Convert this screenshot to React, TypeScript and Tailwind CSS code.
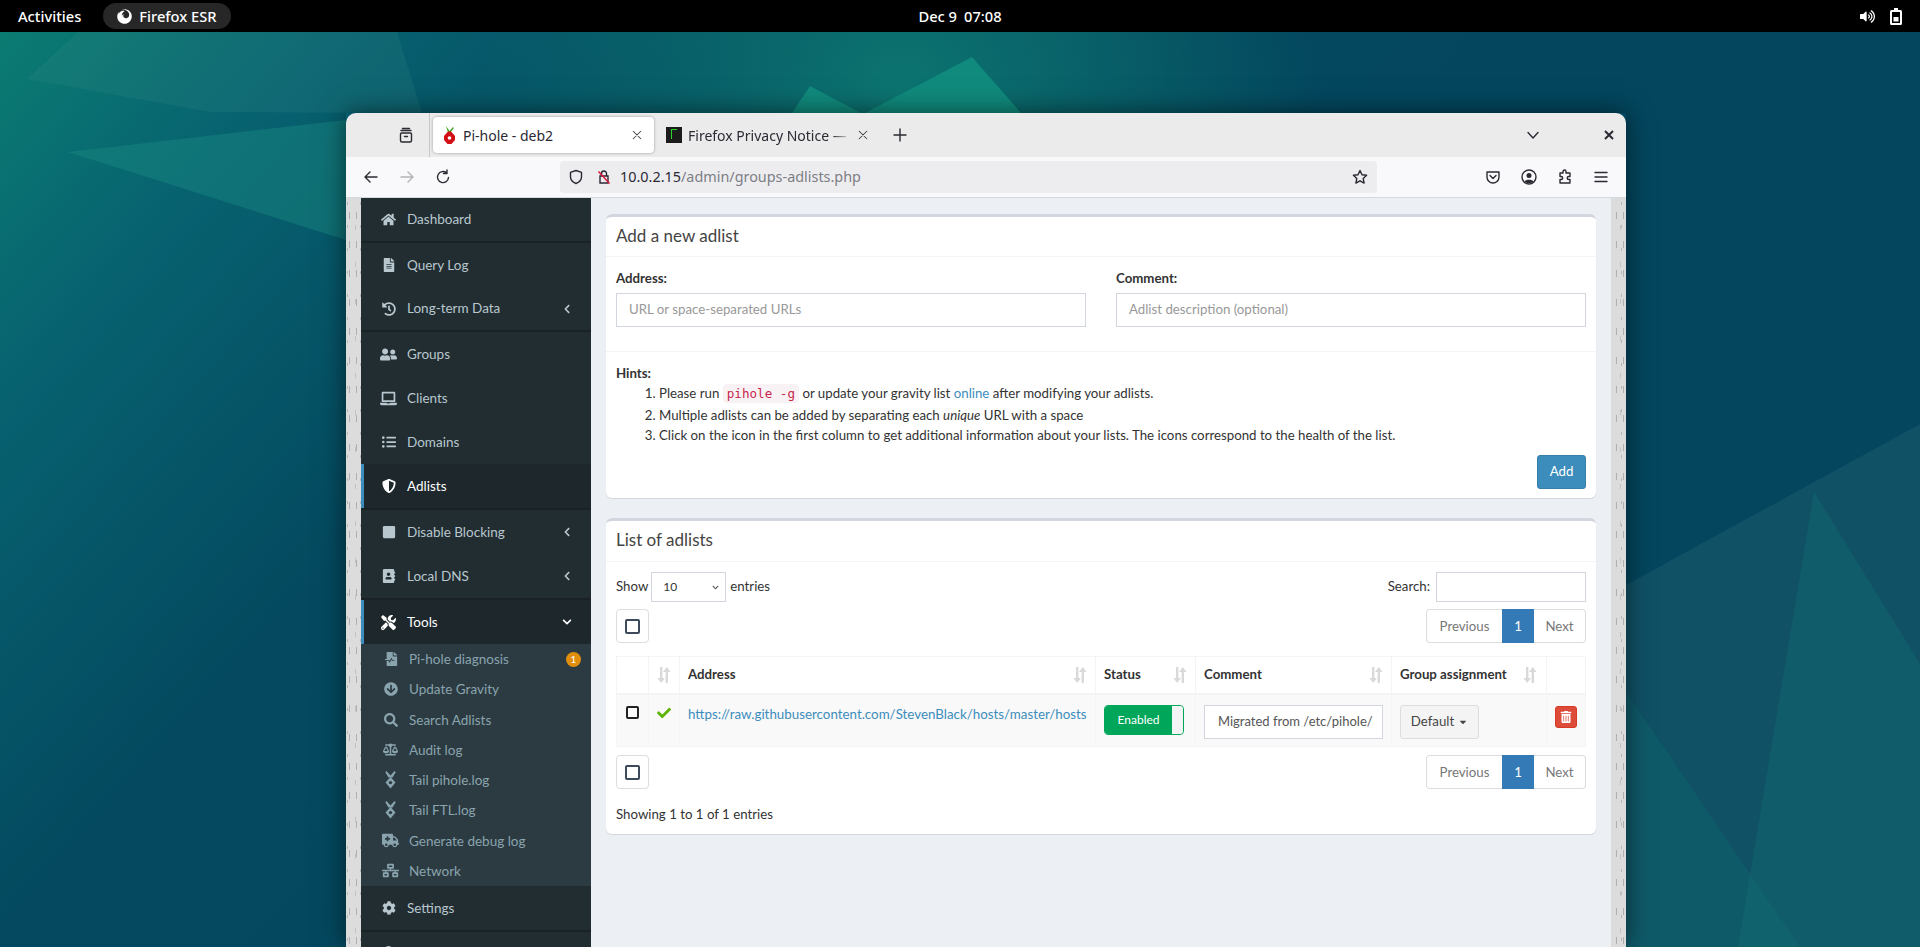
import React from 'react';
import {
  FaAddressBook, FaAmbulance, FaArrowCircleDown, FaBalanceScale, FaCaretDown, FaCheck, FaChevronDown, FaChevronLeft, FaCog,
  FaFileAlt, FaFileMedicalAlt, FaFirefox, FaHistory, FaHome, FaLaptop, FaListUl, FaNetworkWired, FaSearch, FaShieldAlt,
  FaStop, FaTools, FaTrashAlt, FaUser, FaUserFriends, FaVolumeUp,
} from 'react-icons/fa';

const ui = "font-['Lato','Liberation_Sans',sans-serif]";

// pi-hole's own log icon, no package has this one
const PiholeIcon = () => (
  <svg width="13" height="18" viewBox="0 0 13 18" fill="currentColor">
    <path d="M2.500 0l4 4.500L10.500 0l1.200 1.200L8.500 6.500h-4L1.300 1.200z" />
    <path d="M6.500 6l5 5.500-5 6-5-6z" />
    <circle cx="6.500" cy="11.600" r="1.700" fill="#2c3b41" />
  </svg>
);

const SortIcon = () => (
  <svg width="14" height="16" viewBox="0 0 14 16" fill="#d9d9d9" className="shrink-0">
    <path d="M3 0h2.400v11H8l-3.800 5L.4 11H3z" />
    <path d="M8.600 16h2.400V5h2.600L9.800 0 6 5h2.600z" />
  </svg>
);

const Wallpaper = () => (
  <svg className="absolute inset-0 h-full w-full" viewBox="0 0 1920 915" preserveAspectRatio="none">
    <defs>
      <linearGradient id="wall" gradientUnits="userSpaceOnUse" x1="0" y1="0" x2="900" y2="800">
        <stop offset="0" stopColor="#0b7c72" />
        <stop offset="0.2" stopColor="#076270" />
        <stop offset="0.5" stopColor="#04495f" />
        <stop offset="1" stopColor="#03465e" />
      </linearGradient>
      <radialGradient id="glow" gradientUnits="userSpaceOnUse" cx="900" cy="60" r="420">
        <stop offset="0" stopColor="#0c7470" />
        <stop offset="1" stopColor="#0c7470" stopOpacity="0" />
      </radialGradient>
    </defs>
    <rect width="1920" height="915" fill="url(#wall)" />
    <rect width="1920" height="915" fill="url(#glow)" />
    <polygon points="78,0 27,47 210,80 422,81 397,0" fill="#3f8f8c" opacity="0.18" />
    <polygon points="68,120 346,88 346,208" fill="#1a8a80" opacity="0.45" />
    <polygon points="810,54 792,81 861,81" fill="#108a7c" />
    <polygon points="972,25 865,81 1021,81" fill="#108a7c" />
    <polygon points="1920,392 1626,553 1626,915 1920,915" fill="#2a6a78" opacity="0.32" />
    <polygon points="1814,460 1920,632 1920,915 1738,915" fill="#138078" opacity="0.25" />
    <polygon points="1626,660 1800,915 1626,915" fill="#0f7a78" opacity="0.22" />
  </svg>
);

const Topbar = () => (
  <div className="relative z-10 flex h-8 items-center justify-between bg-black pl-[18px] pr-[18px] font-['Noto_Sans',sans-serif] text-[14.700px] font-medium text-white">
    <div className="flex flex-1 items-center">
      <span>Activities</span>
      <div className="ml-[22px] flex h-[26px] items-center gap-[7px] rounded-full bg-[#272727] pl-[14px] pr-[14px]">
        <FaFirefox size={15} />
        <span>Firefox ESR</span>
      </div>
    </div>
    <div className="flex gap-[7px]"><span>Dec 9</span><span>07:08</span></div>
    <div className="flex flex-1 items-center justify-end gap-[15px]">
      <FaVolumeUp size={15} />
      <svg width="12" height="17" viewBox="0 0 12 17" fill="white"><path d="M4 0h4v2h2.500a1.500 1.500 0 0 1 1.500 1.500V15.500a1.500 1.500 0 0 1-1.500 1.500h-9A1.500 1.500 0 0 1 0 15.500V3.500A1.500 1.500 0 0 1 1.500 2H4zM2 4v11h8V4zM3.500 9h5v4.500h-5z" fillRule="evenodd" /></svg>
    </div>
  </div>
);

const ChromeIcon = ({ d, className = '' }: { d: string; className?: string }) => (
  <svg width="16" height="16" viewBox="0 0 16 16" fill="none" stroke="currentColor" strokeWidth="1.400" strokeLinecap="round" strokeLinejoin="round" className={`shrink-0 ${className}`}>
    <path d={d} />
  </svg>
);

const Browser = () => (
  <div className="font-['Noto_Sans',sans-serif] text-[#2b2a33]">
    <div className="flex h-11 items-center rounded-t-[10px] bg-[#ebebeb]">
      <div className="flex h-full w-[83px] items-center justify-center pl-[37px]">
        <ChromeIcon d="M4.500 1.500h7M3 3.500h10M3.500 6h9a1 1 0 0 1 1 1v6.500a1.500 1.500 0 0 1-1.500 1.500H4a1.500 1.500 0 0 1-1.500-1.500V7a1 1 0 0 1 1-1zM6.500 9.500h3" />
      </div>
      <div className="h-full w-px bg-[#c8c8c8]" />
      <div className="ml-[3px] flex h-9 w-[221px] items-center rounded-[4px] bg-white pl-[10px] pr-[11px] text-[14px] shadow-[0_0_3px_rgba(0,0,0,0.35)]">
        <svg width="13" height="19" viewBox="0 0 13 19" className="mr-[7px] shrink-0">
          <path d="M3 0l3.500 5L10 1l.8 1-3 4h-3z" fill="#3ea31e" />
          <path d="M5 5.500h3L12 10v4l-3.500 4h-4L1 14v-4z" fill="#d10f14" />
          <circle cx="6.500" cy="12" r="1.800" fill="#fff" />
        </svg>
        <span>Pi-hole - deb2</span>
        <span className="ml-auto text-[#444]"><ChromeIcon className="h-3 w-3" d="M3 3l10 10M13 3L3 13" /></span>
      </div>
      <div className="flex h-9 items-center pl-[12px] text-[14px]">
        <div className="mr-[6px] flex h-4 w-4 shrink-0 items-start justify-center bg-[#1c1c1c] pt-[2px]"><div className="h-[10px] w-[6px] border-l border-t border-[#27d827]" /></div>
        <span className="w-[163px] overflow-hidden whitespace-nowrap [mask-image:linear-gradient(to_right,black_88%,transparent)]">Firefox Privacy Notice — Mozilla</span>
        <span className="ml-[6px] text-[#444]"><ChromeIcon className="h-3 w-3" d="M3 3l10 10M13 3L3 13" /></span>
      </div>
      <ChromeIcon className="ml-[23px]" d="M8 2v12M2 8h12" />
      <div className="ml-auto flex items-center">
        <ChromeIcon className="mr-[63px]" d="M3 5.500l5 5.500 5-5.500" />
        <svg width="10" height="10" viewBox="0 0 10 10" className="mr-[12px]" stroke="#2b2a33" strokeWidth="2"><path d="M1 1l8 8M9 1L1 9" /></svg>
      </div>
    </div>
    <div className="flex h-[40px] items-center bg-[#f9f9fb] pl-[17px] pr-[17px]">
      <ChromeIcon d="M14 8H2M7 3L2 8l5 5" />
      <ChromeIcon className="ml-[20px] text-[#b3b3b6]" d="M2 8h12M9 3l5 5-5 5" />
      <ChromeIcon className="ml-[20px]" d="M13.500 8.500A5.500 5.500 0 1 1 11.500 3.800M12 1v3.500H8.500" />
      <div className="ml-[109px] flex h-[32px] w-[817px] items-center rounded-[4px] bg-[#ededf0] pl-[8px] pr-[9px] text-[14.400px]">
        <ChromeIcon d="M8 1.500l5.500 1.800v4.700c0 3.200-2.500 5.300-5.500 6.500-3-1.200-5.500-3.300-5.500-6.500V3.300z" />
        <svg width="16" height="16" viewBox="0 0 16 16" fill="none" strokeWidth="1.400" className="ml-[12px] shrink-0">
          <path d="M4 7h8v7H4zM5.500 7V4.500a2.500 2.500 0 0 1 5 0V7" stroke="#2b2a33" />
          <path d="M2.500 2.500l11 12" stroke="#e0123a" />
        </svg>
        <span className="ml-[8px]">10.0.2.15<span className="text-[#7d7d84]">/admin/groups-adlists.php</span></span>
        <ChromeIcon className="ml-auto" d="M8 1.500l2 4.200 4.600.6-3.400 3.200.9 4.600L8 11.800l-4.100 2.300.9-4.600L1.400 6.300 6 5.700z" />
      </div>
      <div className="ml-auto flex items-center gap-[20px]">
        <ChromeIcon d="M2 3h12v5a6 6 0 0 1-12 0zM5 6.500l3 3 3-3" />
        <svg width="16" height="16" viewBox="0 0 16 16" fill="none"><circle cx="8" cy="8" r="7" stroke="#2b2a33" strokeWidth="1.400" /><circle cx="8" cy="6.500" r="2.500" fill="#2b2a33" /><path d="M3.500 12.500c1-2.500 8-2.500 9 0C11 14.500 5 14.500 3.500 12.500z" fill="#2b2a33" /></svg>
        <ChromeIcon d="M6 2.500a1.500 1.500 0 0 1 3 0V4h4v3.500h-1.300a1.500 1.500 0 0 0 0 3H13V14H3v-3.500h1.200a1.500 1.500 0 0 0 0-3H3V4h3z" />
        <ChromeIcon d="M2 3.500h12M2 8h12M2 12.500h12" />
      </div>
    </div>
    <div className="h-px bg-[#d4dae2]" />
  </div>
);

type NavItem = { label: string; icon: React.ReactNode; arrow?: boolean; active?: boolean; open?: boolean; sep?: boolean; h?: string };

const nav1: NavItem[] = [
  { label: 'Dashboard', icon: <FaHome size={15} />, sep: true, h: 'h-[45px]' },
  { label: 'Query Log', icon: <FaFileAlt size={14} />, h: 'h-[44px]' },
  { label: 'Long-term Data', icon: <FaHistory size={14} />, arrow: true, sep: true, h: 'h-[45px]' },
  { label: 'Groups', icon: <FaUserFriends size={17} />, h: 'h-[44px]' },
  { label: 'Clients', icon: <FaLaptop size={17} />, h: 'h-[44px]' },
  { label: 'Domains', icon: <FaListUl size={14} />, h: 'h-[44px]' },
  { label: 'Adlists', icon: <FaShieldAlt size={14} />, active: true, sep: true, h: 'h-[46px]' },
  { label: 'Disable Blocking', icon: <FaStop size={14} />, arrow: true, h: 'h-[44px]' },
  { label: 'Local DNS', icon: <FaAddressBook size={14} />, arrow: true, sep: true, h: 'h-[46px]' },
  { label: 'Tools', icon: <FaTools size={15} />, active: true, open: true, h: 'h-[44px]' },
];

const subNav: { label: string; icon: React.ReactNode; badge?: boolean }[] = [
  { label: 'Pi-hole diagnosis', icon: <FaFileMedicalAlt size={14} />, badge: true },
  { label: 'Update Gravity', icon: <FaArrowCircleDown size={14} /> },
  { label: 'Search Adlists', icon: <FaSearch size={14} /> },
  { label: 'Audit log', icon: <FaBalanceScale size={15} /> },
  { label: 'Tail pihole.log', icon: <PiholeIcon /> },
  { label: 'Tail FTL.log', icon: <PiholeIcon /> },
  { label: 'Generate debug log', icon: <FaAmbulance size={17} /> },
  { label: 'Network', icon: <FaNetworkWired size={17} /> },
];

const Sidebar = () => (
  <aside className="h-full w-[230px] shrink-0 overflow-hidden bg-[#222d32] text-[13.500px]">
    {nav1.map((n) => (
      <div key={n.label} className={`${n.h} ${n.sep ? 'border-b-2 border-[#1a2226]' : ''}`}>
        <div className={`flex h-full items-center border-l-[3px] pr-[19px] ${n.active ? 'border-[#3c8dbc] bg-[#1e282c] text-white' : 'border-transparent text-[#b8c7ce]'}`}>
          <span className="ml-[16px] mr-[10px] flex w-[17px] justify-center">{n.icon}</span>
          <span>{n.label}</span>
          {n.arrow && <FaChevronLeft size={10} className="ml-auto" />}
          {n.open && <FaChevronDown size={10} className="ml-auto" />}
        </div>
      </div>
    ))}
    <ul className="bg-[#2c3b41] text-[#8aa4af]">
      {subNav.map((s) => (
        <li key={s.label} className="flex h-[30.250px] items-center pl-[21px] pr-[10px]">
          <span className="mr-[10px] flex w-[17px] justify-center">{s.icon}</span>
          <span>{s.label}</span>
          {s.badge && <span className="ml-auto flex h-[15px] w-[15px] items-center justify-center rounded-full bg-[#e08e0b] text-[10px] text-white">1</span>}
        </li>
      ))}
    </ul>
    <div className="h-[46px] border-b-2 border-[#1a2226]">
      <div className="flex h-full items-center border-l-[3px] border-transparent text-[#b8c7ce]">
        <span className="ml-[16px] mr-[10px] flex w-[17px] justify-center"><FaCog size={14} /></span>
        <span>Settings</span>
      </div>
    </div>
    <div className="flex h-[44px] items-center pl-[19px] text-[#b8c7ce]">
      <span className="flex w-[17px] justify-center"><FaUser size={17} /></span>
    </div>
  </aside>
);

const cardCls = 'rounded-[6px] border-t-[3px] border-[#d2d6de] bg-white shadow-[0_1px_1px_rgba(0,0,0,0.1)]';
const inputCls = 'border border-[#d2d6de] bg-white';

const Pager = () => (
  <div className="flex h-[34px] text-[#777]">
    <div className="flex w-[76px] items-center justify-center rounded-l-[4px] border border-r-0 border-[#ddd] pt-px">Previous</div>
    <div className="flex w-[32px] items-center justify-center bg-[#337ab7] pt-px text-white">1</div>
    <div className="flex w-[52px] items-center justify-center rounded-r-[4px] border border-l-0 border-[#ddd] pt-px">Next</div>
  </div>
);

const SelectAll = () => (
  <div className="flex h-[34px] w-[33px] items-center justify-center rounded-[4px] border border-[#ddd]">
    <div className="h-[15px] w-[15px] rounded-[2px] border-2 border-[#3d4a5c]" />
  </div>
);

const thCls = 'border-r border-[#f4f4f4] px-[8px]';

const Content = () => (
  <main className={`flex flex-1 flex-col gap-[20px] bg-[#ecf0f5] px-[15px] pt-[16px] text-[13.250px] text-[#333] ${ui}`}>
    <section className={`${cardCls} h-[284px]`}>
      <h3 className="flex h-[40px] items-center border-b border-[#f4f4f4] px-[10px] pb-[2px] text-[17px] text-[#444]">Add a new adlist</h3>
      <div className="flex h-[95px] gap-[30px] border-b border-[#f4f4f4] px-[10px] pt-[12px]">
        <div className="flex-1">
          <label className="block font-bold leading-[18px]">Address:</label>
          <div className={`${inputCls} mt-[6px] flex h-[34px] items-center px-[12px] text-[#999]`}>URL or space-separated URLs</div>
        </div>
        <div className="flex-1">
          <label className="block font-bold leading-[18px]">Comment:</label>
          <div className={`${inputCls} mt-[6px] flex h-[34px] items-center px-[12px] text-[#999]`}>Adlist description (optional)</div>
        </div>
      </div>
      <div className="px-[10px] pt-[11px]">
        <p className="font-bold leading-[20px]">Hints:</p>
        <ol className="list-decimal pl-[43px] leading-[20.500px]">
          <li>Please run <code className="rounded-[4px] bg-[#f9f2f4] px-[4px] py-[2px] font-['DejaVu_Sans_Mono',monospace] text-[12.600px] text-[#c7254e]">pihole -g</code> or update your gravity list <span className="text-[#3c8dbc]">online</span> after modifying your adlists.</li>
          <li>Multiple adlists can be added by separating each <i>unique</i> URL with a space</li>
          <li>Click on the icon in the first column to get additional information about your lists. The icons correspond to the health of the list.</li>
        </ol>
        <div className="mt-[9px] flex justify-end">
          <button className="h-[34px] w-[49px] rounded-[3px] border border-[#367fa9] bg-[#3c8dbc] text-white">Add</button>
        </div>
      </div>
    </section>

    <section className={`${cardCls} h-[316px]`}>
      <h3 className="flex h-[41px] items-center border-b border-[#f4f4f4] px-[10px] pb-[2px] text-[17px] text-[#444]">List of adlists</h3>
      <div className="px-[10px] pt-[10px]">
        <div className="flex h-[30px] items-center justify-between">
          <div className="flex items-center">
            <span>Show</span>
            <div className={`${inputCls} ml-[3px] mr-[4px] flex h-[30px] w-[75px] items-center justify-between pl-[11px] pr-[6px] text-[12px]`}>
              <span>10</span>
              <FaChevronDown size={7} className="text-[#555]" />
            </div>
            <span>entries</span>
          </div>
          <div className="flex items-center">
            <span className="mr-[6px]">Search:</span>
            <div className={`${inputCls} h-[30px] w-[150px]`} />
          </div>
        </div>
        <div className="mt-[7px] flex items-center justify-between">
          <SelectAll />
          <Pager />
        </div>
        <table className="mt-[13px] w-full table-fixed border-collapse border border-[#f4f4f4]">
          <colgroup>
            <col className="w-[32px]" /><col className="w-[31px]" /><col className="w-[416px]" /><col className="w-[100px]" /><col className="w-[196px]" /><col className="w-[155px]" /><col />
          </colgroup>
          <thead>
            <tr className="h-[37px] border-b-2 border-[#f4f4f4] font-bold">
              <th className={thCls} />
              <th className={thCls}><SortIcon /></th>
              <th className={`${thCls} pt-px`}><div className="flex items-center justify-between text-left">Address<SortIcon /></div></th>
              <th className={`${thCls} pt-px`}><div className="flex items-center justify-between text-left">Status<SortIcon /></div></th>
              <th className={`${thCls} pt-px`}><div className="flex items-center justify-between text-left">Comment<SortIcon /></div></th>
              <th className={`${thCls} pt-px`}><div className="flex items-center justify-between whitespace-nowrap pr-[1px] text-left">Group assignment<SortIcon /></div></th>
              <th />
            </tr>
          </thead>
          <tbody>
            <tr className="h-[53px] bg-[#f9f9f9] align-top">
              <td className={`${thCls} pt-[11px]`}><div className="mx-auto h-[13px] w-[13px] rounded-[2px] border-2 border-[#222]" /></td>
              <td className={`${thCls} pt-[11px]`}><FaCheck size={14} className="text-[#5cb300]" /></td>
              <td className={`${thCls} whitespace-nowrap pt-[9px] text-[13.350px] text-[#3c8dbc]`}>https://raw.githubusercontent.com/StevenBlack/hosts/master/hosts</td>
              <td className={`${thCls} pt-[10px]`}>
                <div className="flex h-[30px] w-[80px] overflow-hidden rounded-[4px] border border-[#00a65a] text-[12px]">
                  <div className="flex flex-1 items-center justify-center bg-[#00a65a] text-white">Enabled</div>
                  <div className="w-[11px] rounded-[3px] bg-[#f4f4f4]" />
                </div>
              </td>
              <td className={`${thCls} pt-[10px]`}>
                <div className={`${inputCls} flex h-[34px] items-center whitespace-nowrap px-[13px] text-[13px] text-[#555]`}>Migrated from /etc/pihole/</div>
              </td>
              <td className={`${thCls} pt-[10px]`}>
                <div className="flex h-[34px] w-[79px] items-center justify-center gap-[4px] rounded-[3px] border border-[#ddd] bg-[#f4f4f4] text-[#444]">Default<FaCaretDown size={10} /></div>
              </td>
              <td className="pt-[11px]">
                <div className="mx-auto flex h-[22px] w-[22px] items-center justify-center rounded-[3px] border border-[#d73925] bg-[#dd4b39] text-white"><FaTrashAlt size={12} /></div>
              </td>
            </tr>
          </tbody>
        </table>
        <div className="mt-[8px] flex items-center justify-between">
          <SelectAll />
          <Pager />
        </div>
        <p className="mt-[16px] leading-[18px]">Showing 1 to 1 of 1 entries</p>
      </div>
    </section>
  </main>
);

const App: React.FC = () => (
  <div className="relative h-[947px] w-[1920px] overflow-hidden bg-[#075a68]">
    <Topbar />
    <div className="relative h-[915px]">
      <Wallpaper />
      <div className="absolute left-[346px] top-[81px] flex h-[834px] w-[1280px] flex-col shadow-[0_0_24px_rgba(0,0,0,0.55)]">
        <Browser />
        <div className={`flex min-h-0 flex-1 bg-[#dcdcdc] bg-[radial-gradient(#b0b0b0_0.8px,transparent_0.9px),radial-gradient(#c2c2c2_0.8px,transparent_0.9px),radial-gradient(#b8b8b8_0.8px,transparent_0.9px)] bg-[length:7px_29px,11px_37px,13px_23px] bg-[position:0_3px,4px_11px,8px_17px] pl-[15px] pr-[15px] ${ui}`}>
          <Sidebar />
          <Content />
        </div>
      </div>
    </div>
  </div>
);

export default App;
